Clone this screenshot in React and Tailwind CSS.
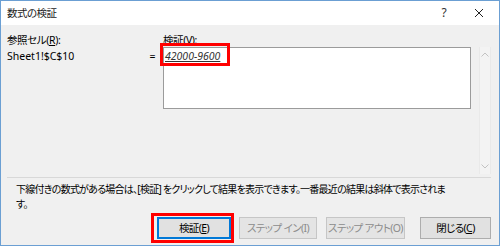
export default function App() {
  return (
    <div className="w-[500px] h-[247px] bg-white font-['Noto_Sans','Noto_Sans_CJK_JP',sans-serif] text-[10.5px] text-black [font-feature-settings:'palt']">
      <div className="w-[500px] h-[246px] border border-[#6b9fd3] flex flex-col">
        <div className="h-[24px] shrink-0 bg-white flex items-center">
          <span className="pl-[6px] leading-[14px] text-[#1a1a1a] tracking-[-0.5px]">数式の検証</span>
          <span className="ml-auto w-[30px] text-center text-[12px] leading-[14px] text-[#333]">?</span>
          <span className="w-[40px] flex justify-center">
            <svg width="10" height="10" viewBox="0 0 10 10">
              <path d="M1 1 L9 9 M9 1 L1 9" stroke="#222" strokeWidth="1" fill="none" />
            </svg>
          </span>
        </div>
        <div className="flex-1 bg-[#f0f0f0] flex flex-col">
          <div className="h-[152px] shrink-0 flex">
            <div className="w-[142px] pl-[6px] pt-[8px] leading-[14px]">
              <div className="tracking-[-0.4px]">参照セル(<span className="underline">R</span>):</div>
              <div className="mt-[2px]">Sheet1!$C$10</div>
            </div>
            <div className="w-[19px] pt-[24px] leading-[14px] text-center">=</div>
            <div className="ml-px pt-[8px] leading-[14px]">
              <div className="tracking-[-0.4px]">検証(<span className="underline">V</span>):</div>
              <div className="relative w-[308px] h-[62px] border border-[#9b9b9b] bg-white pl-px pt-px">
                <span className="italic underline text-[#333]">42000-9600</span>
                <div className="absolute left-[-4px] top-[-5px] w-[70px] h-[23px] border-[3px] border-[#ff0000]" />
              </div>
            </div>
            <div className="ml-[8px] mt-[22px] w-[12px] h-[127px] bg-[#f3f3f3] border-x border-[#e9e9e9] flex flex-col items-center justify-between py-[5px]">
              <svg width="8" height="5" viewBox="0 0 8 5">
                <path d="M0.5 4.5 L4 1 L7.5 4.5" stroke="#c2c2c2" strokeWidth="1" fill="none" />
              </svg>
              <svg width="8" height="5" viewBox="0 0 8 5">
                <path d="M0.5 0.5 L4 4 L7.5 0.5" stroke="#c2c2c2" strokeWidth="1" fill="none" />
              </svg>
            </div>
          </div>
          <div className="ml-[6px] w-[484px] h-px bg-[#d8d8d8]" />
          <div className="pt-[4px] pl-[15px] leading-[15px] text-[10px] tracking-[-0.75px]">
            <div className="whitespace-nowrap">下線付きの数式がある場合は、[検証] をクリックして結果を表示できます。一番最近の結果は斜体で表示されま</div>
            <div className="whitespace-nowrap">す。</div>
          </div>
          <div className="mt-[5px] pl-[156px] flex whitespace-nowrap tracking-[-0.6px]">
            <div className="relative w-[74px] h-[22px] bg-[#e1e1e1] border border-[#0078d7] shadow-[inset_0_0_0_1px_#0078d7] flex items-center justify-center leading-[14px]">
              検証(<span className="underline">E</span>)
              <div className="absolute left-[-7px] top-[-5px] w-[83px] h-[30px] border-[3px] border-[#ff0000]" />
            </div>
            <div className="ml-[8px] w-[78px] h-[22px] bg-[#e4e4e4] border border-[#c6c6c6] text-[#8c8c8c] flex items-center justify-center leading-[14px]">
              ステップ&nbsp;イン(I)
            </div>
            <div className="ml-[9px] w-[79px] h-[22px] bg-[#e4e4e4] border border-[#c6c6c6] text-[#8c8c8c] flex items-center justify-center leading-[14px]">
              ステップ&nbsp;アウト(O)
            </div>
            <div className="ml-[15px] w-[71px] h-[22px] bg-[#e1e1e1] border border-[#adadad] flex items-center justify-center leading-[14px]">
              閉じる(<span className="underline">C</span>)
            </div>
          </div>
        </div>
      </div>
    </div>
  );
}
